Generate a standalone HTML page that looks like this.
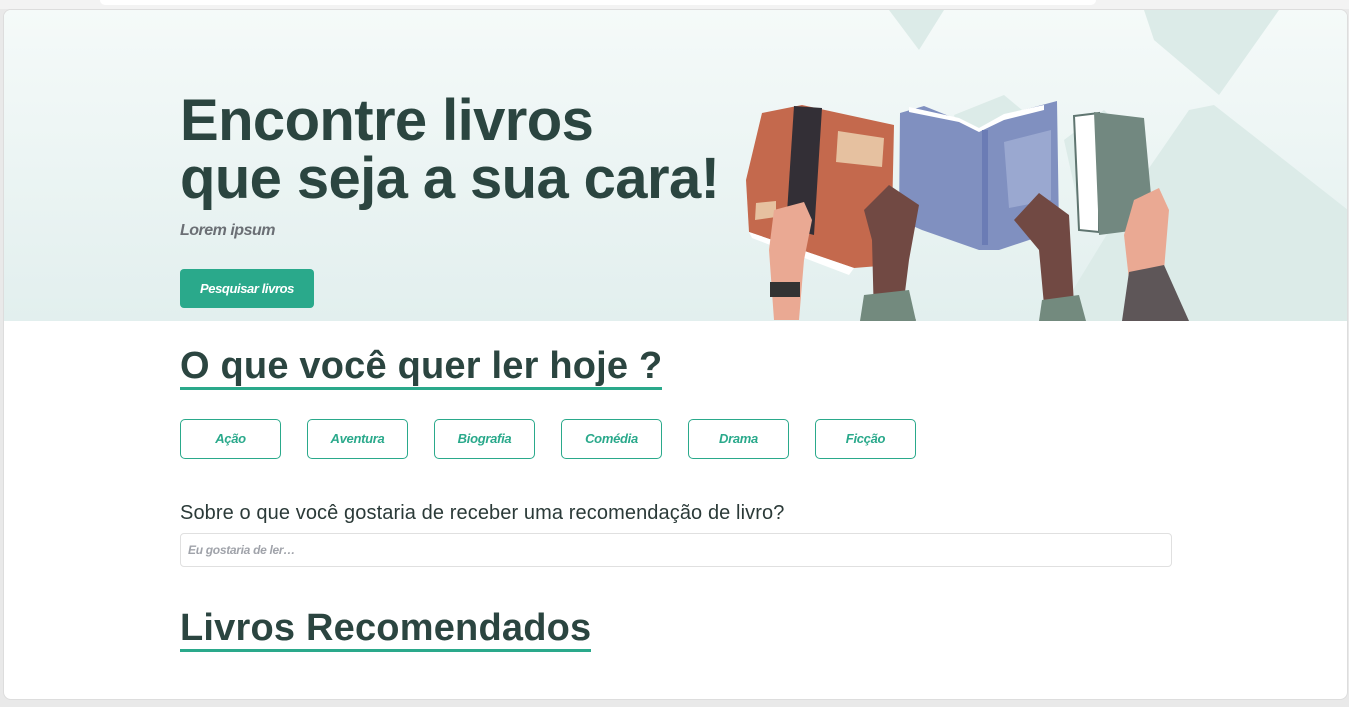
<!DOCTYPE html>
<html><head><meta charset="utf-8"><style>
*{margin:0;padding:0;box-sizing:border-box}
body{width:1349px;height:707px;background:#e9e9e9;font-family:"Liberation Sans",sans-serif;position:relative;overflow:hidden}
.top{position:absolute;left:0;top:0;width:1349px;height:9px;background:#f3f3f3}
.tab{position:absolute;left:100px;top:0;width:996px;height:5px;background:#fff;border-radius:0 0 8px 8px}
.card{position:absolute;left:3px;top:9px;width:1345px;height:691px;background:#fff;border:1px solid #ddd;border-radius:8px;overflow:hidden}
.hero{position:absolute;left:0;top:0;width:1345px;height:311px;background:linear-gradient(#f5faf9,#e2efee)}
h1{position:absolute;left:176px;top:82px;font-size:58px;line-height:58px;color:#2b4540;letter-spacing:-0.6px;font-weight:bold}
.lorem{position:absolute;left:176px;top:212px;font-size:16px;font-style:italic;font-weight:bold;color:#6b6f75;letter-spacing:-0.5px}
.btn{position:absolute;left:176px;top:259px;width:134px;height:39px;background:#2aa98b;border-radius:4px;color:#fff;font-size:13px;font-weight:bold;font-style:italic;text-align:center;line-height:39px;letter-spacing:-0.4px}
h2{position:absolute;left:176px;font-size:38px;color:#2b4540;font-weight:bold;letter-spacing:0.2px;border-bottom:3px solid #2aa98b;line-height:42px}
.cat{position:absolute;top:409px;width:101px;height:40px;border:1px solid #2aa98b;border-radius:5px;color:#2aa98b;font-size:13px;font-style:italic;font-weight:bold;text-align:center;line-height:38px;letter-spacing:-0.3px}
.q{position:absolute;left:176px;top:492px;font-size:20px;color:#2b3a38;letter-spacing:0.1px}
.inp{position:absolute;left:176px;top:523px;width:992px;height:34px;border:1px solid #e0e0e0;border-radius:4px;font-size:12px;font-style:italic;font-weight:bold;color:#a0a3aa;padding-left:7px;line-height:32px;letter-spacing:-0.3px}
</style></head><body>
<div class="top"><div class="tab"></div></div>
<div class="card">
<div class="hero">
<svg width="1344" height="311" style="position:absolute;left:0;top:0">
<g fill="#dcebe8">
<polygon points="885,0 940,0 915,40"/>
<polygon points="1140,0 1275,0 1215,85 1150,30"/>
<polygon points="950,105 1000,85 1030,110 975,180"/>
<polygon points="1060,130 1100,100 1140,140 1080,220"/>
<polygon points="1130,180 1185,100 1210,95 1344,200 1344,311 1050,311"/>
</g>
<polygon points="758,103 798,95 890,115 887,255 850,258 745,222 742,170" fill="#c4694d"/>
<polygon points="745,222 850,258 845,265 748,228" fill="#fff"/>
<polygon points="790,96 818,98 810,225 782,218" fill="#332f36"/>
<polygon points="834,121 880,128 878,157 832,152" fill="#e6c1a0"/>
<polygon points="752,193 772,191 772,207 751,210" fill="#e6c1a0"/>
<polygon points="896,103 920,96 955,110 978,120 1000,105 1053,91 1055,220 995,240 975,240 918,220 895,210" fill="#8090c0"/>
<polygon points="905,97 955,108 975,118 1000,104 1040,95 1040,100 1000,110 975,122 955,112 905,102" fill="#fff"/>
<rect x="978" y="120" width="6" height="115" fill="#6b7cb5"/>
<polygon points="1000,132 1047,120 1047,190 1005,198" fill="#9aa8d0"/>
<polygon points="1070,106 1095,103 1095,222 1075,220" fill="#fff" stroke="#5f7570" stroke-width="2"/>
<polygon points="1090,102 1140,108 1150,218 1095,225" fill="#728880"/>
<path d="M770,310 L765,240 L770,200 L800,192 L808,210 L800,250 L795,310 Z" fill="#eaa993"/>
<rect x="766" y="272" width="30" height="15" fill="#333"/>
<path d="M870,310 L868,230 L860,200 L885,175 L915,195 L905,250 L900,290 L912,310 Z" fill="#714943"/>
<path d="M856,311 L860,285 L905,280 L912,311 Z" fill="#738a7e"/>
<path d="M1040,295 L1035,240 L1010,210 L1035,183 L1065,205 L1070,295 Z" fill="#714943"/>
<path d="M1035,311 L1038,290 L1075,285 L1082,311 Z" fill="#738a7e"/>
<path d="M1125,270 L1120,225 L1130,190 L1155,178 L1165,200 L1160,260 Z" fill="#eaa993"/>
<path d="M1118,311 L1125,262 L1160,255 L1185,311 Z" fill="#5e5658"/>
</svg>
<h1>Encontre livros<br>que seja a sua cara!</h1>
<div class="lorem">Lorem ipsum</div>
<div class="btn">Pesquisar livros</div>
</div>
<h2 style="top:335px">O que você quer ler hoje ?</h2>
<div class="cat" style="left:176px">Ação</div>
<div class="cat" style="left:303px">Aventura</div>
<div class="cat" style="left:430px">Biografia</div>
<div class="cat" style="left:557px">Comédia</div>
<div class="cat" style="left:684px">Drama</div>
<div class="cat" style="left:811px">Ficção</div>
<div class="q">Sobre o que você gostaria de receber uma recomendação de livro?</div>
<div class="inp">Eu gostaria de ler…</div>
<h2 style="top:597px">Livros Recomendados</h2>
</div>
</body></html>
